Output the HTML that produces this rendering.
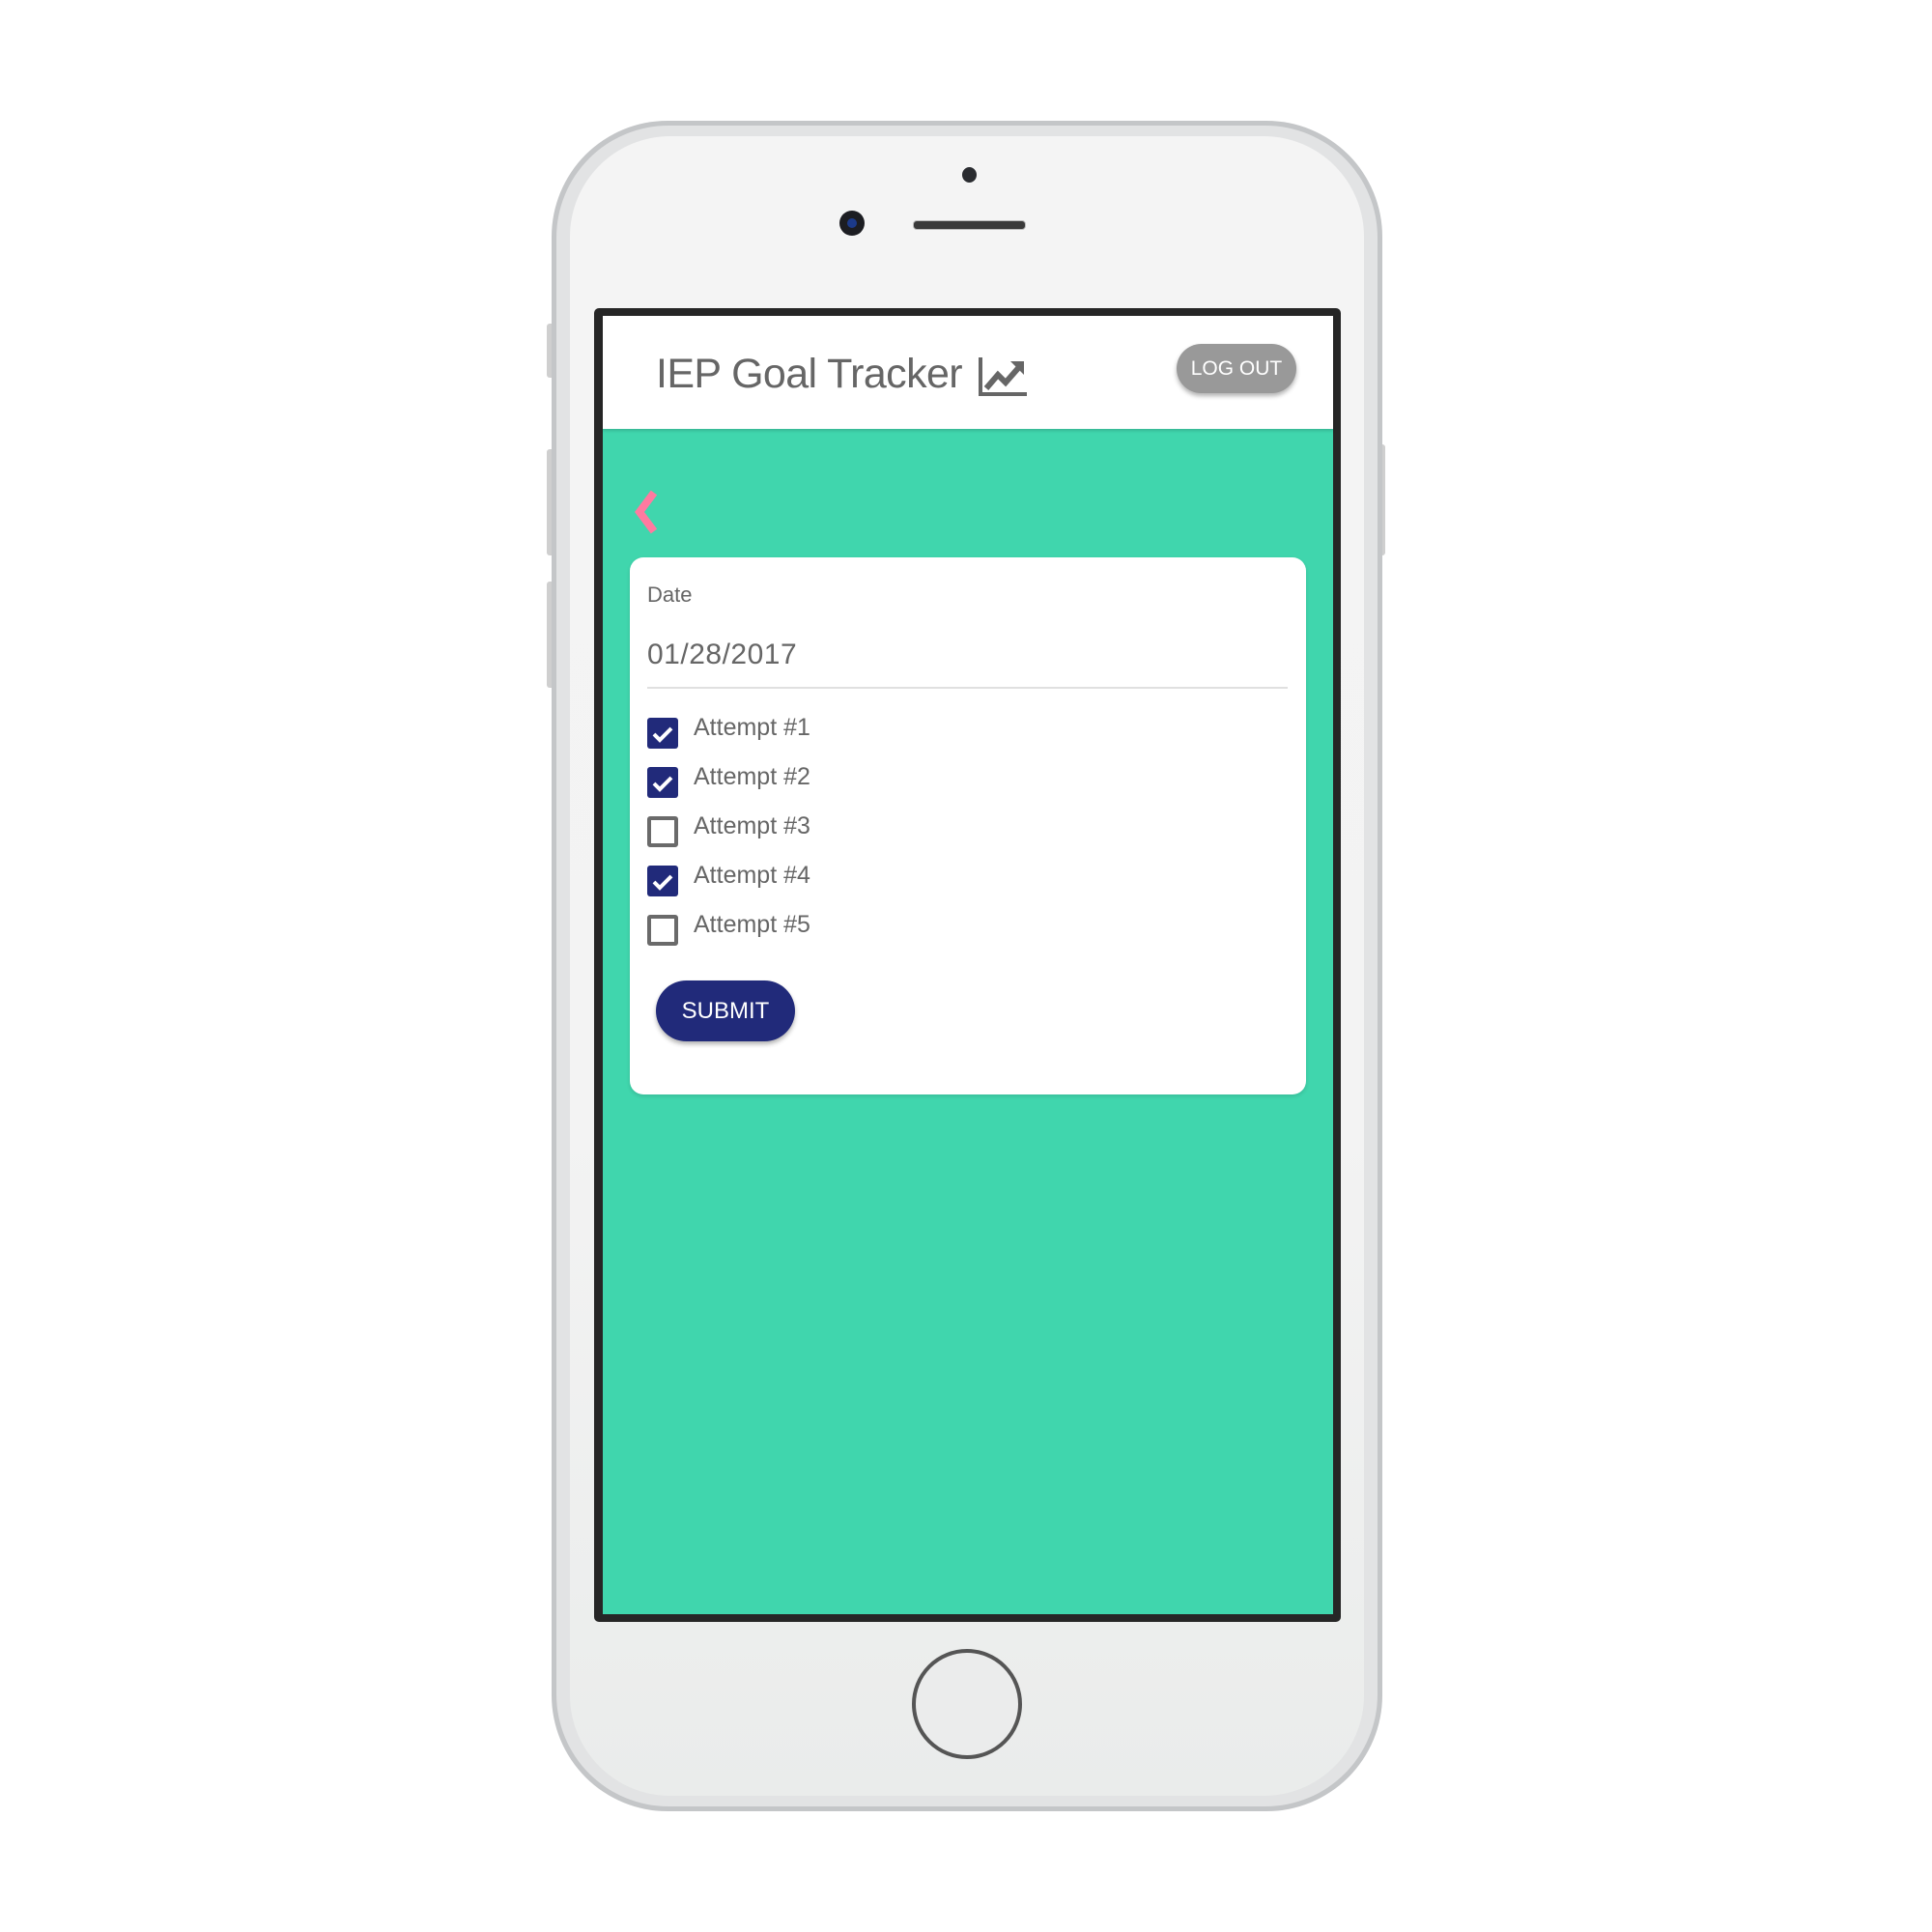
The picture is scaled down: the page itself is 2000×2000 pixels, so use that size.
<!DOCTYPE html>
<html><head><meta charset="utf-8"><style>
body{margin:0;width:2000px;height:2000px;background:#fff;position:relative;overflow:hidden;font-family:"Liberation Sans",sans-serif}
.a{position:absolute}
.cb{position:absolute;left:670px;width:32px;height:32px;box-sizing:border-box;border-radius:3px}
.on{background:#212a7a}
.off{border:4px solid #6a6a6a}
.lb{position:absolute;left:718px;font-size:25px;color:#666;line-height:30px}
</style></head><body>
<div class="a" style="left:566px;top:335px;width:8px;height:56px;background:#cfcfcf;border-radius:3px"></div>
<div class="a" style="left:566px;top:465px;width:8px;height:110px;background:#cfcfcf;border-radius:3px"></div>
<div class="a" style="left:566px;top:602px;width:8px;height:110px;background:#cfcfcf;border-radius:3px"></div>
<div class="a" style="left:1426px;top:460px;width:8px;height:115px;background:#cfcfcf;border-radius:3px"></div>
<div class="a" style="left:571px;top:125px;width:860px;height:1750px;border-radius:120px;background:#c4c6c8"></div>
<div class="a" style="left:576px;top:130px;width:850px;height:1740px;border-radius:116px;background:#e2e3e4"></div>
<div class="a" style="left:590px;top:141px;width:822px;height:1718px;border-radius:104px;background:linear-gradient(#f4f4f4,#f3f3f3 60%,#eaeceb)"></div>
<div class="a" style="left:996px;top:173px;width:15px;height:16px;border-radius:50%;background:#2a2c30"></div>
<div class="a" style="left:869px;top:218px;width:26px;height:26px;border-radius:50%;background:#1c1d22"></div>
<div class="a" style="left:877px;top:226px;width:10px;height:10px;border-radius:50%;background:#1c3a8a"></div>
<div class="a" style="left:945px;top:228px;width:115px;height:8px;border-radius:4px;background:#3a3a3a;border:1px solid #bbb"></div>
<div class="a" style="left:615px;top:319px;width:773px;height:1360px;background:#262626;border-radius:5px"></div>
<div class="a" style="left:624px;top:327px;width:756px;height:1344px;background:#40d6ad"></div>
<div class="a" style="left:624px;top:327px;width:756px;height:117px;background:#fff;box-shadow:0 2px 3px rgba(0,0,0,.15)"></div>
<div class="a" style="left:679px;top:362px;font-size:43px;color:#666;line-height:50px;letter-spacing:-0.6px">IEP Goal Tracker</div>
<svg class="a" style="left:1012px;top:368px" width="52" height="44" viewBox="0 0 52 44">
<path d="M3 2V40H51" fill="none" stroke="#666" stroke-width="4"/>
<path d="M9 34L21 20L29 28L43 12" fill="none" stroke="#666" stroke-width="6"/>
<path d="M34 6H48V20Z" fill="#666"/>
</svg>
<div class="a" style="left:1218px;top:356px;width:124px;height:51px;border-radius:26px;background:#999;box-shadow:0 3px 5px rgba(0,0,0,.3);color:#fff;font-size:21px;line-height:51px;text-align:center">LOG OUT</div>
<svg class="a" style="left:652px;top:505px" width="32" height="50" viewBox="0 0 32 50"><path d="M25 5L10 25L25 45" fill="none" stroke="#ff7aa0" stroke-width="8"/></svg>
<div class="a" style="left:652px;top:577px;width:700px;height:556px;background:#fff;border-radius:14px;box-shadow:0 2px 4px rgba(0,0,0,.12)"></div>
<div class="a" style="left:670px;top:603px;font-size:22px;color:#666">Date</div>
<div class="a" style="left:670px;top:661px;font-size:30px;color:#666;letter-spacing:0.5px">01/28/2017</div>
<div class="a" style="left:670px;top:711px;width:663px;height:2px;background:#e0e0e0"></div>
<div class="cb on" style="top:743px"></div>
<div class="cb on" style="top:794px"></div>
<div class="cb off" style="top:845px"></div>
<div class="cb on" style="top:896px"></div>
<div class="cb off" style="top:947px"></div>
<svg class="a" style="left:670px;top:743px" width="32" height="240" viewBox="0 0 32 240">
<g fill="none" stroke="#fff" stroke-width="4"><path d="M7 17L13 23L25 11"/><path d="M7 68L13 74L25 62"/><path d="M7 170L13 176L25 164"/></g></svg>
<div class="lb" style="top:738px">Attempt #1</div>
<div class="lb" style="top:789px">Attempt #2</div>
<div class="lb" style="top:840px">Attempt #3</div>
<div class="lb" style="top:891px">Attempt #4</div>
<div class="lb" style="top:942px">Attempt #5</div>
<div class="a" style="left:679px;top:1015px;width:144px;height:63px;border-radius:32px;background:#212a7a;box-shadow:0 3px 5px rgba(0,0,0,.3);color:#fff;font-size:24px;line-height:63px;text-align:center">SUBMIT</div>
<div class="a" style="left:944px;top:1707px;width:114px;height:114px;border-radius:50%;box-sizing:border-box;border:4px solid #555;background:#ebecec"></div>
</body></html>
